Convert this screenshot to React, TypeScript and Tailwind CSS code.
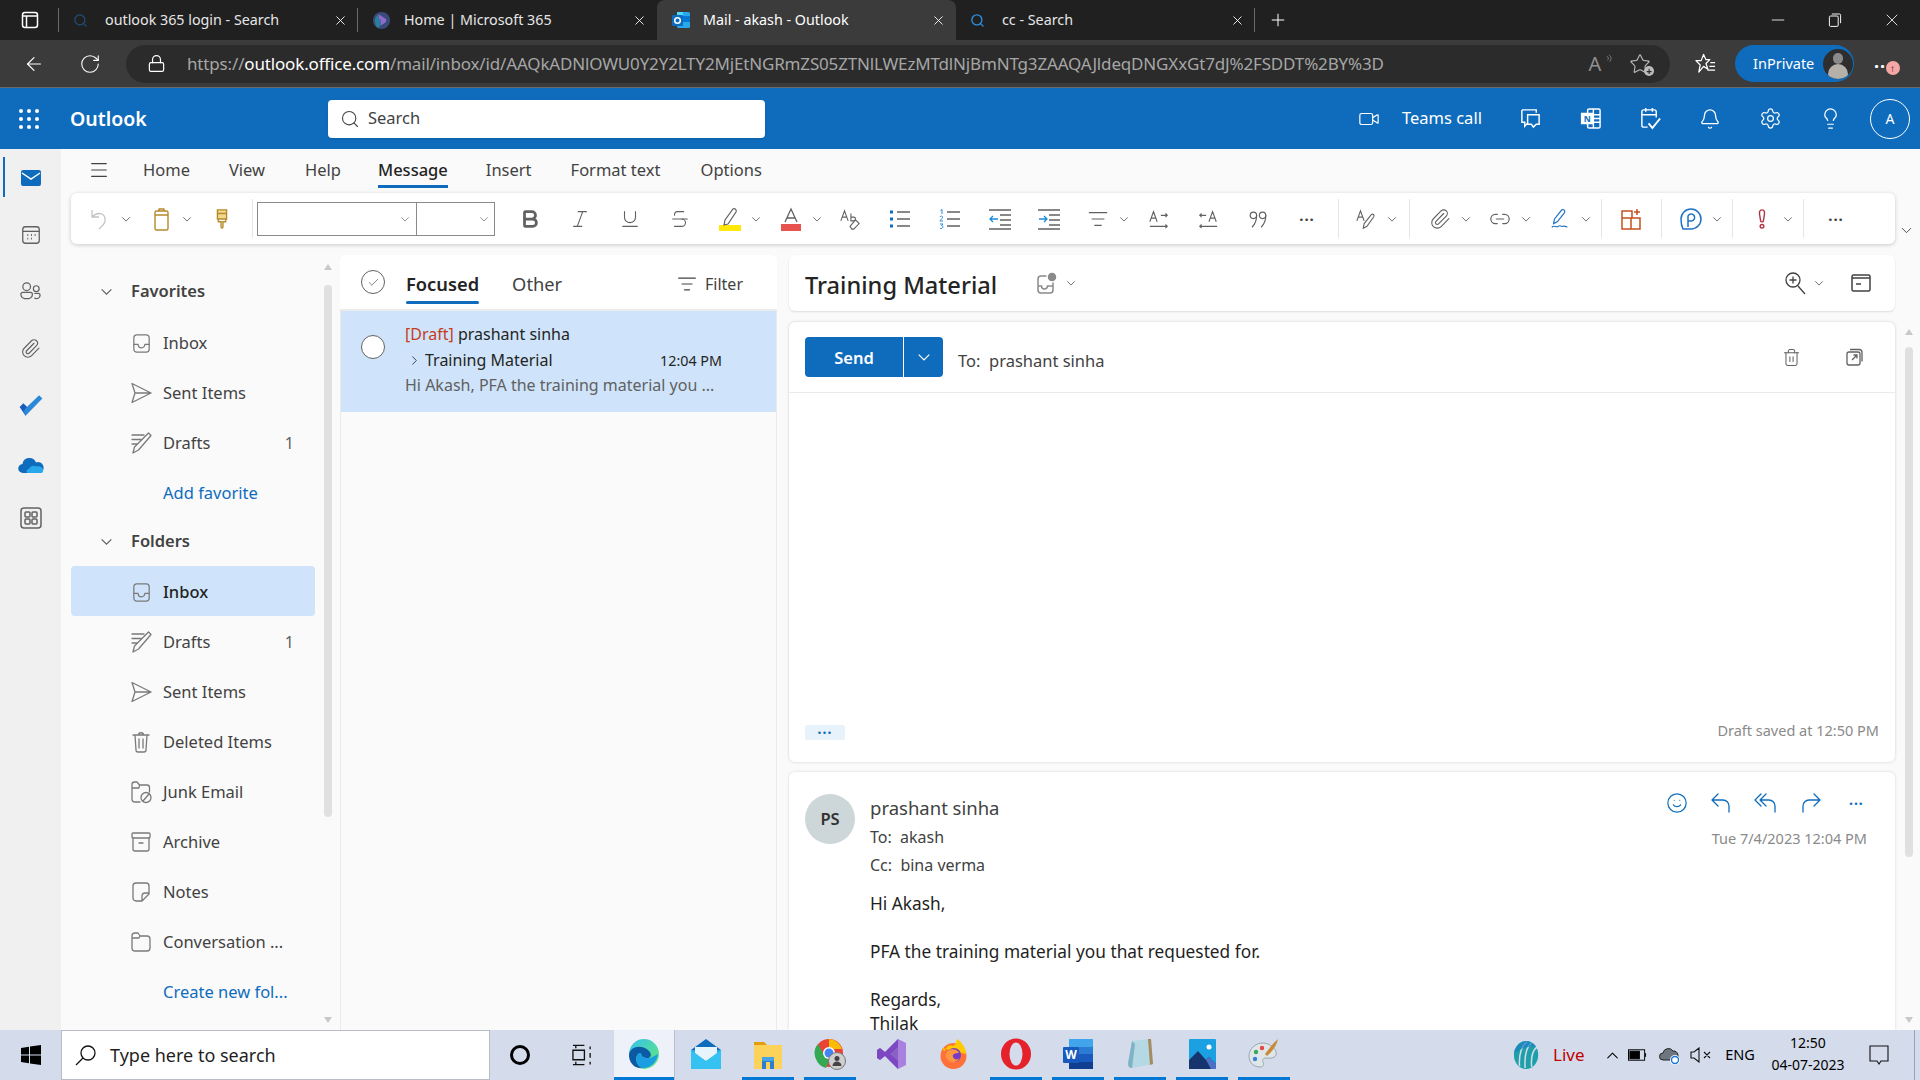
import type { ReactNode } from 'react'
import { Bold, Italic, Underline, Strikethrough, RotateCw, ArrowLeft, Lock, Search, Minus, Plus, X, Star, ChevronDown, ChevronRight, ChevronUp, Menu, Video, Bell, Settings, Lightbulb, Paperclip, Link2, Smile, Trash2, Check, ListFilter } from 'lucide-react'

function Ic({ children, className = '', sw = 1.3 }: { children: ReactNode; className?: string; sw?: number }) {
  return <svg viewBox="0 0 24 24" fill="none" stroke="currentColor" strokeWidth={sw} strokeLinecap="round" strokeLinejoin="round" className={className}>{children}</svg>
}

const InboxIc = () => <Ic className="w-[23px] h-[23px]"><rect x="4" y="3" width="16" height="18" rx="3" /><path d="M4 13h4.5a3.5 3.5 0 0 0 7 0H20" /></Ic>
const SentIc = () => <Ic className="w-[24px] h-[24px]"><path d="M3 2.5 22 12 3 21.5 6 12zM6 12h16" /></Ic>
const DraftIc = () => <Ic className="w-[24px] h-[24px]"><path d="M3 4h12M3 8.5h9M3 13h5" /><path d="M19.500 2 22 4.500 9.500 19 4 22l1.500-6z" /></Ic>
const TrashIc = () => <Ic className="w-[24px] h-[24px]"><path d="M4 5h16M9.500 5c0-3 5-3 5 0M6 5l1 15c0 1 .8 2 2 2h6c1.200 0 2-1 2-2l1-15M10 9v9M14 9v9" /></Ic>
const JunkIc = () => <Ic className="w-[24px] h-[24px]"><path d="M11 22H6a3 3 0 0 1-3-3V4.500A2.500 2.500 0 0 1 5.500 2H8l2.500 3H18a2.500 2.500 0 0 1 2.500 2.500V12M3 8h7l.5-3" /><circle cx="17" cy="17.500" r="5" /><path d="m14 21 6-7" /></Ic>
const ArchiveIc = () => <Ic className="w-[24px] h-[24px]"><rect x="3" y="3" width="18" height="5" rx="1" /><path d="M4 8v11a2 2 0 0 0 2 2h12a2 2 0 0 0 2-2V8M10 13h4" /></Ic>
const NoteIc = () => <Ic className="w-[24px] h-[24px]"><path d="M7 3h10a3 3 0 0 1 3 3v8l-7 7H7a3 3 0 0 1-3-3V6a3 3 0 0 1 3-3zM20 13h-4c-2 0-3 1.500-3 3.500V21" /></Ic>
const FolderIc = () => <Ic className="w-[24px] h-[24px]"><path d="M6 3h3l2 3h7a3 3 0 0 1 3 3v9a3 3 0 0 1-3 3H6a3 3 0 0 1-3-3V6a3 3 0 0 1 3-3zM3 8h7l1-2" /></Ic>

function Caret({ className = 'text-[#616161]' }: { className?: string }) {
  return <svg viewBox="0 0 12 12" className={`w-[10px] h-[10px] ${className}`} fill="none" stroke="currentColor" strokeWidth="1.100"><path d="M1.500 4 6 8.500 10.500 4" /></svg>
}

function Tab({ icon, title, active, sep }: { icon: ReactNode; title: string; active?: boolean; sep?: boolean }) {
  return (
    <div className={`w-[299px] h-[40px] flex items-center shrink-0 pl-[14px] relative ${active ? 'bg-[#3b3b3b] rounded-t-[8px] text-white' : 'text-[#e6e6e6]'}`}>
      <span className="w-[32px] flex items-center shrink-0">{icon}</span>
      <span className="w-[228px] text-[14.300px] truncate mt-[-1px]">{title}</span>
      <X className="w-[15px] h-[15px] text-white" strokeWidth={1.4} />
      {sep && <span className="absolute right-0 top-[8px] bottom-[8px] w-px bg-[#6a6a6a]" />}
    </div>
  )
}

function TopIcon({ children, className = 'w-[60px]' }: { children: ReactNode; className?: string }) {
  return <div className={`${className} h-full flex items-center justify-center shrink-0`}>{children}</div>
}

function TabBar() {
  const winBtn = 'w-[20px] h-[20px] text-white'
  return (
    <div className="h-[40px] bg-[#202020] flex items-center shrink-0">
      <div className="w-[59px] h-[40px] flex items-center justify-center border-r-0 relative">
        <svg viewBox="0 0 20 20" className="w-[20px] h-[20px] text-white mr-[-1px]" fill="none" stroke="currentColor" strokeWidth="1.500"><rect x="2.500" y="2.500" width="15" height="15" rx="2.500" /><path d="M2.500 6h15M6.500 6v11.500" /></svg>
        <span className="absolute right-0 top-[8px] bottom-[8px] w-px bg-[#6a6a6a]" />
      </div>
      <Tab icon={<Search className="w-[15px] h-[15px] text-[#1e4f7d]" strokeWidth={2} />} title="outlook 365 login - Search" sep />
      <Tab title="Home | Microsoft 365" icon={<svg viewBox="0 0 20 20" className="w-[19px] h-[19px]"><path d="M10 1a9 9 0 1 0 .01 0z" fill="#3a4a78" /><path d="M7 3.500 14 8c1.500 1 1.500 3 0 4l-5 3.500V9.500L7 8.500z" fill="#8f6ac8" /><path d="M7 3.500v5l2 1v6L6 18c-2-2-3-5-3-8s2-5 4-6.500z" fill="#2a7f9c" /></svg>} />
      <Tab active title="Mail - akash - Outlook" icon={<OutlookLogo />} />
      <Tab title="cc - Search" icon={<Search className="w-[15px] h-[15px] text-[#2c8fe0]" strokeWidth={2.200} />} sep />
      <div className="ml-[13px] w-[20px] flex justify-center"><Plus className="w-[20px] h-[20px] text-white" strokeWidth={1.200} /></div>
      <div className="ml-auto flex items-center h-full">
        <TopIcon className="w-[57px]"><Minus className={winBtn} strokeWidth={1} /></TopIcon>
        <TopIcon className="w-[57px]"><svg viewBox="0 0 20 20" className="w-[16px] h-[16px] text-white" fill="none" stroke="currentColor" strokeWidth="1.200"><rect x="3" y="5" width="11" height="13" rx="1.500" /><path d="M6 2.500h9.500A1.500 1.500 0 0 1 17 4v10" /></svg></TopIcon>
        <TopIcon className="w-[57px]"><X className={winBtn} strokeWidth={1} /></TopIcon>
      </div>
    </div>
  )
}

function OutlookLogo() {
  return (
    <svg viewBox="0 0 20 20" className="w-[20px] h-[20px]">
      <rect x="6" y="2" width="13" height="16" rx="1.500" fill="#28a8ea" />
      <rect x="12" y="6" width="7" height="6" fill="#0078d4" />
      <rect x="6" y="2" width="6" height="5" fill="#50d9ff" />
      <rect x="1" y="5" width="11" height="11" rx="1" fill="#0f6cbd" />
      <circle cx="6.500" cy="10.500" r="2.800" fill="none" stroke="#fff" strokeWidth="1.500" />
    </svg>
  )
}

function AddressBar() {
  return (
    <div className="h-[48px] bg-[#3b3b3b] border-b border-[#6a6a6a] flex items-center shrink-0 text-white box-border">
      <div className="w-[68px] flex justify-center"><ArrowLeft className="w-[22px] h-[22px]" strokeWidth={1.300} /></div>
      <div className="w-[44px] flex justify-center"><RotateCw className="w-[22px] h-[22px]" strokeWidth={1.200} /></div>
      <div className="ml-[14px] w-[1544px] h-[38px] bg-[#2b2b2b] rounded-full flex items-center">
        <span className="w-[61px] flex justify-center"><Lock className="w-[19px] h-[19px] text-white" strokeWidth={1.500} /></span>
        <span className="text-[17px] tracking-[-0.160px] text-[#a6a6a6] whitespace-nowrap w-[1388px] overflow-hidden">https://<span className="text-white">outlook.office.com</span>/mail/inbox/id/AAQkADNlOWU0Y2Y2LTY2MjEtNGRmZS05ZTNlLWEzMTdlNjBmNTg3ZAAQAJldeqDNGXxGt7dJ%2FSDDT%2BY%3D</span>
        <span className="w-[40px] flex justify-center text-[#8f8f8f] relative text-[20px]">A<svg viewBox="0 0 10 14" className="absolute right-[2px] top-[5px] w-[7px] h-[10px]" fill="none" stroke="currentColor"><path d="M1 3c3 1 3 4 1 6M4 1c4 2 4 7 1 10" /></svg></span>
        <span className="ml-[5px] w-[40px] flex justify-center relative text-[#bdbdbd]"><Star className="w-[22px] h-[22px]" strokeWidth={1.200} /><span className="absolute right-[6px] bottom-[-1px] w-[10px] h-[10px] rounded-full bg-[#bdbdbd] text-[#2b2b2b] flex items-center justify-center text-[10px] leading-none font-bold">+</span></span>
      </div>
      <div className="ml-[10px] w-[50px] flex justify-center"><svg viewBox="0 0 24 24" className="w-[23px] h-[23px]" fill="none" stroke="currentColor" strokeWidth="1.300" strokeLinejoin="round"><path d="M10 2.500 12.500 8h4l-4 4 2 6-4.500-3L5 21l1.500-7.500L2 9h5.500zM17 11h5M16 15h6M14 19h8" /></svg></div>
      <div className="w-[119px] h-[37px] rounded-full bg-[#0f6cbd] flex items-center pl-[18px] text-[14.500px] shrink-0 ml-[5px]">
        InPrivate
        <span className="ml-[9px] w-[30px] h-[30px] rounded-full bg-[#2e2e2e] overflow-hidden flex justify-center relative">
          <span className="absolute top-[4px] w-[10px] h-[11px] rounded-full bg-[#8a8a8a]" />
          <span className="absolute top-[15px] w-[20px] h-[20px] rounded-full bg-[#b5b0a8]" />
        </span>
      </div>
      <div className="ml-[20px] relative text-[18px] font-bold leading-none tracking-[1px] mt-[-6px]">...
        <span className="absolute left-[12px] top-[9px] w-[14px] h-[14px] rounded-full bg-[#f4a7a5] text-[#3b1111] text-[10px] flex items-center justify-center font-normal">↑</span>
      </div>
    </div>
  )
}

function Header() {
  return (
    <div className="h-[61px] bg-[#0f6cbd] flex items-center text-white shrink-0">
      <div className="w-[58px] flex justify-center">
        <div className="grid grid-cols-3 gap-[4px]">{[...Array(9)].map((_, i) => <span key={i} className="w-[4px] h-[4px] rounded-full bg-white" />)}</div>
      </div>
      <div className="ml-[12px] w-[258px] text-[19.500px] font-semibold">Outlook</div>
      <div className="w-[437px] h-[38px] bg-white rounded-[4px] flex items-center pl-[12px] text-[#424242] text-[16.500px] shadow-sm">
        <Search className="w-[20px] h-[20px] mr-[8px]" strokeWidth={1.300} />Search
      </div>
      <div className="ml-[587px] w-[34px] flex justify-center"><Video className="w-[22px] h-[22px]" strokeWidth={1.300} /></div>
      <div className="ml-[16px] w-[98px] text-[16.500px] whitespace-nowrap">Teams call</div>
      <TopIcon className="w-[60px] ml-[0px]"><svg viewBox="0 0 24 24" className="w-[23px] h-[23px]" fill="none" stroke="currentColor" strokeWidth="1.500"><path d="M3 3h15v3M3 3v13h3v4l3-3" /><path d="M9 8h12v10h-3l-3 3-2-3H9z" /></svg></TopIcon>
      <TopIcon><svg viewBox="0 0 24 24" className="w-[23px] h-[23px]" fill="none" stroke="currentColor" strokeWidth="1.500"><rect x="9" y="2" width="13" height="20" rx="1.500" /><path d="M15 8h7M15 12h7M15 16h7M15 2v20" /><rect x="2" y="6" width="13" height="12" fill="#fff" stroke="none" /><text x="8.500" y="15.500" fontSize="9" fontWeight="700" textAnchor="middle" fill="#0f6cbd" stroke="none" fontFamily="Noto Sans">N</text></svg></TopIcon>
      <TopIcon><svg viewBox="0 0 24 24" className="w-[23px] h-[23px]" fill="none" stroke="currentColor" strokeWidth="1.500"><path d="M9 21H5a2 2 0 0 1-2-2V5a2 2 0 0 1 2-2h11a2 2 0 0 1 2 2v6M3 8h15M7 1v4M14 1v4" /><path d="m10 17 4 5 8-10" strokeWidth="2" /></svg></TopIcon>
      <TopIcon><Bell className="w-[22px] h-[22px]" strokeWidth={1.400} /></TopIcon>
      <TopIcon><Settings className="w-[23px] h-[23px]" strokeWidth={1.300} /></TopIcon>
      <TopIcon><Lightbulb className="w-[23px] h-[23px]" strokeWidth={1.300} /></TopIcon>
      <div className="w-[40px] h-[40px] rounded-full border border-white flex items-center justify-center text-[14px] shrink-0 ml-[10px]">A</div>
    </div>
  )
}

function Rail() {
  return (
    <div className="w-[61px] bg-[#f0f0f0] shrink-0 flex flex-col items-center text-[#616161]">
      <div className="h-[57px] w-full flex items-center justify-center relative">
        <span className="absolute left-[3px] top-[8px] bottom-[9px] w-[2px] bg-[#0f6cbd]" />
        <svg viewBox="0 0 24 24" className="w-[24px] h-[24px]"><rect x="2" y="4" width="20" height="16" rx="2" fill="#0f6cbd" /><path d="m3 7 9 6 9-6" fill="none" stroke="#fff" strokeWidth="1.500" /></svg>
      </div>
      <div className="h-[57px] flex items-center"><svg viewBox="0 0 24 24" className="w-[22px] h-[22px]" fill="none" stroke="currentColor" strokeWidth="1.400"><rect x="3" y="3" width="18" height="18" rx="3" /><path d="M3 8h18" /><path d="M8 12h1M12 12h1M16 12h1M8 16h1M12 16h1" strokeWidth="2" /></svg></div>
      <div className="h-[57px] flex items-center"><svg viewBox="0 0 24 24" className="w-[23px] h-[23px]" fill="none" stroke="currentColor" strokeWidth="1.300"><circle cx="8" cy="7" r="4" /><circle cx="18" cy="9" r="3" /><path d="M2 15c0-1 1-2 2-2h8c1 0 2 1 2 2 0 6-12 6-12 0zM16 14h4c1 0 2 1 2 2 0 3-3 4-6 3" /></svg></div>
      <div className="h-[57px] flex items-center"><Paperclip className="w-[21px] h-[21px]" strokeWidth={1.300} /></div>
      <div className="h-[57px] flex items-center"><svg viewBox="0 0 24 24" className="w-[26px] h-[26px]"><path d="M1.500 13 5 9.500l4.500 4.500L7 21z" fill="#185abd" /><path d="M7 21 22.500 5l-3-3L7 14l-2 3z" fill="#2b88d8" /></svg></div>
      <div className="h-[61px] flex items-center"><svg viewBox="0 0 26 18" className="w-[26px] h-[18px]"><path d="M5 17a4.500 4.500 0 0 1-.5-9A7 7 0 0 1 18 6.500 5 5 0 0 1 22 17z" fill="#0f6cbd" /><path d="M10 17c-2 0-2-4 1-4 1-3 5-4 7-2.500 5-1 8 2 7 5-.5 1-1 1.500-3 1.500z" fill="#28a8ea" /></svg></div>
      <div className="h-[46px] flex items-center"><svg viewBox="0 0 24 24" className="w-[24px] h-[24px]" fill="none" stroke="currentColor" strokeWidth="1.500"><rect x="2" y="2" width="20" height="20" rx="3" /><rect x="6" y="6" width="5" height="5" rx="1" /><rect x="13" y="6" width="5" height="5" rx="1" /><rect x="6" y="13" width="5" height="5" rx="1" /><rect x="13" y="13" width="5" height="5" rx="1" /></svg></div>
    </div>
  )
}

function Cell({ children, className = 'w-[50px]' }: { children: ReactNode; className?: string }) {
  return <div className={`${className} h-full flex items-center justify-center shrink-0 text-[#616161]`}>{children}</div>
}

function Split({ children, className = 'w-[61px]' }: { children: ReactNode; className?: string }) {
  return (
    <div className={`${className} h-full flex items-center shrink-0 pl-[5px] text-[#616161]`}>
      <span className="w-[40px] flex justify-center">{children}</span>
      <span className="w-[12px] flex justify-center"><Caret /></span>
    </div>
  )
}

const Sep = ({ className }: { className: string }) => <span className={`w-px h-[39px] bg-[#e6e6e6] shrink-0 ${className}`} />
const t = 'w-[22px] h-[22px]'

function Toolbar() {
  return (
    <div className="flex items-start shrink-0">
      <div className="ml-[10px] w-[1824px] h-[51px] bg-white rounded-[6px] shadow-[0_1px_4px_rgba(0,0,0,0.2)] flex items-center pl-[4px]">
        <Split><svg viewBox="0 0 24 24" className="w-[24px] h-[24px] text-[#c4c4c4]" fill="none" stroke="currentColor" strokeWidth="1.300" strokeLinejoin="round"><path d="M4 3v7h7M4 10c3-3 7-4 10-3 4 2 4 8 1 11l-4 4" /></svg></Split>
        <Split><svg viewBox="0 0 24 24" className="w-[24px] h-[24px]" fill="none" stroke="#b58a2c" strokeWidth="1.400" strokeLinejoin="round"><rect x="6" y="4" width="13" height="19" rx="1.500" /><path d="M10 4V2h5v2M6 8h13" /></svg></Split>
        <Cell><svg viewBox="0 0 24 24" className={t} fill="none" stroke="#b58a2c" strokeWidth="1.500"><path d="M7 2h10v10H7zM7 6h10" fill="#f2d98a" /><path d="M8 12v3h3v6c0 1 2 1 2 0v-6h3v-3" /></svg></Cell>
        <Sep className="ml-[5px] mr-[4px]" />
        <div className="w-[238px] h-[34px] border border-[#8a8a8a] flex shrink-0">
          <div className="w-[159px] border-r border-[#8a8a8a] flex items-center justify-end pr-[6px]"><Caret className="text-[#8a8a8a]" /></div>
          <div className="flex-1 flex items-center justify-end pr-[5px]"><Caret className="text-[#8a8a8a]" /></div>
        </div>
        <span className="w-[10px] shrink-0" />
        <Cell><Bold className={t} strokeWidth={3} /></Cell>
        <Cell><Italic className={t} strokeWidth={1.200} /></Cell>
        <Cell><Underline className={t} strokeWidth={1.200} /></Cell>
        <Cell><Strikethrough className={t} strokeWidth={1.200} /></Cell>
        <Split><svg viewBox="0 0 24 24" className="w-[24px] h-[24px]"><rect x="1" y="18" width="22" height="6" fill="#ffe90a" /><path d="M6 18l1-5L15 2c2-1 4 1 3 3L10 17z" fill="none" stroke="#616161" strokeWidth="1.200" /></svg></Split>
        <Split className="w-[59px]"><svg viewBox="0 0 24 24" className="w-[24px] h-[24px]"><rect x="2" y="17" width="20" height="7" fill="#e8534f" /><path d="M6 15 12 2l6 13M8 11h8" fill="none" stroke="#616161" strokeWidth="1.300" /></svg></Split>
        <Cell><svg viewBox="0 0 24 24" className={t} fill="none" stroke="currentColor" strokeWidth="1.200"><path d="M2 14 6 3l4 11M3.500 10h5M13 6v8h3a2 2 0 0 0 0-4h-3" /><path d="m12 20 6-7 4 4-6 6h-2z" /></svg></Cell>
        <Cell><svg viewBox="0 0 24 24" className="w-[24px] h-[24px]" stroke="#616161" strokeWidth="1.300"><path d="M9 5h13M9 12h13M9 19h13" /><rect x="2" y="3.500" width="3" height="3" fill="#0f6cbd" stroke="none" /><rect x="2" y="10.500" width="3" height="3" fill="#0f6cbd" stroke="none" /><rect x="2" y="17.500" width="3" height="3" fill="#0f6cbd" stroke="none" /></svg></Cell>
        <Cell><svg viewBox="0 0 24 24" className="w-[24px] h-[24px]" stroke="#616161" strokeWidth="1.300"><path d="M9 5h13M9 12h13M9 19h13" /><path d="M2.500 3.500 4 2.500V7M2 10c.5-1.500 3-1 2.500.5S2 13 2 14h3M2 17h3l-1.500 1.500c2-.2 2 3-.5 3L2 21" fill="none" stroke="#2a8fdc" strokeWidth="1" /></svg></Cell>
        <Cell className="w-[49px]"><svg viewBox="0 0 24 24" className="w-[24px] h-[24px]" fill="none" stroke="#616161" strokeWidth="1.300"><path d="M1 3h22M12 8h11M12 13h11M12 18h11M1 22h22" /><path d="M10 12H2m3-3-3 3 3 3" stroke="#1c8bd8" /></svg></Cell>
        <Cell className="w-[49px]"><svg viewBox="0 0 24 24" className="w-[24px] h-[24px]" fill="none" stroke="#616161" strokeWidth="1.300"><path d="M1 3h22M12 8h11M12 13h11M12 18h11M1 22h22" /><path d="M2 12h8m-3-3 3 3-3 3" stroke="#1c8bd8" /></svg></Cell>
        <Split><svg viewBox="0 0 24 24" className="w-[22px] h-[22px]" fill="none" stroke="#616161" strokeWidth="1.300"><path d="M2 5h20M5 12h14M8 19h8" /></svg></Split>
        <Cell className="w-[49px]"><svg viewBox="0 0 24 24" className={t} fill="none" stroke="#616161" strokeWidth="1.200"><path d="M2 15 6 4l4 11M3.500 11h5M14 8h7m-2-2 2 2-2 2M2 20h19m-2-2 2 2-2 2" /></svg></Cell>
        <Cell><svg viewBox="0 0 24 24" className={t} fill="none" stroke="#616161" strokeWidth="1.200"><path d="M13 15 17 4l4 11M14.500 11h5M10 8H3m2-2L3 8l2 2M22 20H3m2-2-2 2 2 2" /></svg></Cell>
        <Cell className="w-[49px]"><svg viewBox="0 0 24 24" className={t} fill="none" stroke="#616161" strokeWidth="1.300"><circle cx="7" cy="8" r="3.500" /><circle cx="17" cy="8" r="3.500" /><path d="M10.500 8c0 6-2 10-5 13M20.500 8c0 6-2 10-5 13" /></svg></Cell>
        <Cell><span className="font-bold text-[15px] tracking-[1px] text-[#424242] mt-[-6px]">...</span></Cell>
        <Sep className="ml-[6px] mr-[2px]" />
        <Split><svg viewBox="0 0 24 24" className={t} fill="none" stroke="#616161" strokeWidth="1.200"><path d="M2 14 6 3l4 11M3.500 10h5" /><path d="m9 22 1-5L18 7c1.500-1 3.500.5 2.500 2.500L13 20z" /></svg></Split>
        <Sep className="ml-[7px] mr-[5px]" />
        <Split className="w-[60px]"><Paperclip className={t} strokeWidth={1.200} /></Split>
        <Split className="w-[60px]"><Link2 className={t} strokeWidth={1.300} /></Split>
        <Split><svg viewBox="0 0 24 24" className={t} fill="none" stroke="#1c73c4" strokeWidth="1.300"><path d="m5 17 1-5L14 2c2-1 4 1 3 3l-8 10zM3 21c3-3 5 1 7-1s3 1 5 0 3 0 5 1" /></svg></Split>
        <Sep className="ml-[5px] mr-[4px]" />
        <Cell><svg viewBox="0 0 24 24" className="w-[24px] h-[24px]" fill="none" stroke="#c4501f" strokeWidth="1.500"><path d="M13 11V4H3v18h18V11zM3 11h18M12 11v11M18 2v6M15 5h6" /></svg></Cell>
        <Sep className="ml-[5px] mr-[4px]" />
        <Split><svg viewBox="0 0 24 24" className="w-[24px] h-[24px]" fill="none" stroke="#1c73c4" strokeWidth="1.500"><path d="M4 22c-1-2-2-5-2-10A10 10 0 1 1 12 22z" /><path d="M9 20V9a3.500 3.500 0 1 1 3.500 5H9" /></svg></Split>
        <Sep className="ml-[5px] mr-[4px]" />
        <Split><svg viewBox="0 0 24 24" className={t}><path d="M12 2c-3 0-3 3-2.500 6l1 6c.2 1.500 2.800 1.500 3 0l1-6C15 5 15 2 12 2z" fill="none" stroke="#b33040" strokeWidth="1.500" /><circle cx="12" cy="20" r="2" fill="none" stroke="#b33040" strokeWidth="1.500" /></svg></Split>
        <Sep className="ml-[5px] mr-[7px]" />
        <Cell><span className="font-bold text-[15px] tracking-[1px] text-[#424242] mt-[-6px]">...</span></Cell>
      </div>
      <div className="ml-[3px] mt-[29px] text-[#424242]"><ChevronDown className="w-[17px] h-[17px]" strokeWidth={1.300} /></div>
    </div>
  )
}

function Row({ icon, label, count, active, low }: { icon: ReactNode; label: string; count?: string; active?: boolean; low?: boolean }) {
  return (
    <div className={`h-[50px] w-[244px] flex items-center shrink-0 rounded-[4px] ${low ? 'pt-[2px]' : ''} ${active ? 'bg-[#cfe4fa] text-[#242424] font-medium' : 'text-[#424242]'}`}>
      <span className="ml-[58px] w-[24px] flex justify-center text-[#7a7a7a] shrink-0">{icon}</span>
      <span className="ml-[10px] text-[16.500px] flex-1">{label}</span>
      {count && <span className="text-[16px] text-[#616161] w-[22px] mr-[21px] text-right">{count}</span>}
    </div>
  )
}

function Head({ label }: { label: string }) {
  return (
    <div className="h-[50px] flex items-center text-[#424242] shrink-0 pl-[29px]">
      <Caret className="text-[#616161] w-[13px] h-[13px]" />
      <span className="text-[16.500px] font-semibold ml-[18px]">{label}</span>
    </div>
  )
}

function LinkRow({ label, low }: { label: string; low?: boolean }) {
  return <div className={`h-[50px] flex items-center pl-[92px] text-[16.500px] text-[#0f6cbd] shrink-0 ${low ? 'pt-[2px]' : ''}`}>{label}</div>
}

function Tri({ up }: { up?: boolean }) {
  return <svg viewBox="0 0 8 6" className="w-[8px] h-[6px] text-[#c8c8c8] shrink-0" fill="currentColor"><path d={up ? 'M0 6h8L4 0z' : 'M0 0h8L4 6z'} /></svg>
}

function FolderPane() {
  return (
    <div className="w-[279px] shrink-0 flex h-full">
      <div className="ml-[10px] w-[244px] pt-[22px] flex flex-col">
        <Head label="Favorites" />
        <div className="h-[2px] shrink-0" />
        <Row icon={<InboxIc />} label="Inbox" />
        <Row icon={<SentIc />} label="Sent Items" />
        <Row icon={<DraftIc />} label="Drafts" count="1" />
        <LinkRow label="Add favorite" />
        <div className="mt-[-2px]"><Head label="Folders" /></div>
        <Row icon={<InboxIc />} label="Inbox" active low />
        <Row icon={<DraftIc />} label="Drafts" count="1" low />
        <Row icon={<SentIc />} label="Sent Items" low />
        <Row icon={<TrashIc />} label="Deleted Items" low />
        <Row icon={<JunkIc />} label="Junk Email" low />
        <Row icon={<ArchiveIc />} label="Archive" low />
        <Row icon={<NoteIc />} label="Notes" low />
        <Row icon={<FolderIc />} label="Conversation ..." low />
        <LinkRow label="Create new fol..." low />
      </div>
      <div className="ml-[9px] w-[8px] flex flex-col pt-[20px] pb-[7px]">
        <Tri up />
        <div className="mt-[15px] h-[532px] rounded-full bg-[#e0e0e0]" />
        <div className="flex-1" />
        <Tri />
      </div>
    </div>
  )
}

function MailList() {
  return (
    <div className="w-[437px] shrink-0 flex flex-col pt-[11px] h-full">
      <div className="h-[56px] bg-white rounded-t-[6px] border-b-2 border-[#ebebeb] flex items-center shrink-0 text-[#424242] box-border">
        <span className="w-[66px] flex justify-center">
          <span className="w-[24px] h-[24px] rounded-full border border-[#616161] flex items-center justify-center"><Check className="w-[13px] h-[13px]" strokeWidth={1.200} /></span>
        </span>
        <div className="h-full flex flex-col justify-center relative pt-[4px]">
          <span className="text-[18.300px] font-semibold text-[#242424]">Focused</span>
          <span className="absolute left-0 right-0 bottom-[5px] h-[3px] rounded-full bg-[#0f6cbd]" />
        </div>
        <span className="ml-[33px] text-[18.300px] text-[#424242] mt-[4px]">Other</span>
        <ListFilter className="ml-auto w-[20px] h-[20px] mr-[8px] mt-[3px]" strokeWidth={1.400} />
        <span className="text-[16px] mr-[34px] mt-[3px]">Filter</span>
      </div>
      <div className="h-[101px] bg-[#cfe4fa] flex shrink-0 border-x border-[#ebebeb]">
        <span className="w-[64px] pt-[24px] flex justify-center shrink-0"><span className="w-[24px] h-[24px] rounded-full bg-white border border-[#616161]" /></span>
        <div className="flex-1 pt-[11px] pr-[54px] text-[16px] leading-[25.500px] min-w-0">
          <div className="text-[#242424] whitespace-nowrap"><span className="text-[#c43e1c]">[Draft]</span> prashant sinha</div>
          <div className="flex items-center text-[#242424]">
            <ChevronRight className="w-[15px] h-[15px] ml-[2px] mr-[3px]" strokeWidth={1.300} />
            <span>Training Material</span>
            <span className="ml-auto text-[14.300px]">12:04 PM</span>
          </div>
          <div className="text-[#616161] whitespace-nowrap overflow-hidden">Hi Akash, PFA the training material you ...</div>
        </div>
      </div>
      <div className="flex-1 bg-[#fafafa] border-x border-[#ebebeb]" />
    </div>
  )
}

function ReplyIc({ flip }: { flip?: boolean }) {
  return <Ic className={`w-[24px] h-[24px] ${flip ? '-scale-x-100' : ''}`} sw={1.300}><path d="M9 3 3 9l6 6M3 9h11a6 6 0 0 1 6 6v6" /></Ic>
}

function ReadingPane() {
  return (
    <div className="flex-1 flex min-w-0 h-full">
      <div className="ml-[12px] w-[1106px] flex flex-col pt-[11px] h-full">
        <div className="h-[56px] bg-white rounded-[6px] shadow-[0_1px_2px_rgba(0,0,0,0.12)] flex items-center shrink-0 pl-[16px] pr-[22px]">
          <span className="text-[23.600px] font-medium text-[#242424] mt-[5px]">Training Material</span>
          <span className="ml-[38px] text-[#8a8a8a]"><svg viewBox="0 0 24 24" className="w-[24px] h-[24px]" fill="none" stroke="currentColor" strokeWidth="1.500"><rect x="3" y="5" width="15" height="17" rx="3" /><path d="M3 15h3.500a3 3 0 0 0 6 0H18" /><circle cx="17" cy="6" r="5" fill="#8a8a8a" stroke="#fff" /></svg></span>
          <span className="ml-[7px]"><Caret /></span>
          <span className="ml-auto text-[#424242]"><svg viewBox="0 0 24 24" className="w-[24px] h-[24px]" fill="none" stroke="currentColor" strokeWidth="1.300"><circle cx="10" cy="9" r="7" /><path d="M15 15l7 8M10 5.500v7M6.500 9h7" /></svg></span>
          <span className="ml-[7px] mr-[25px]"><Caret /></span>
          <svg viewBox="0 0 24 24" className="w-[24px] h-[24px] text-[#424242]" fill="none" stroke="currentColor" strokeWidth="1.500"><rect x="3" y="4" width="18" height="16" rx="1.500" /><path d="M3 7h18M7 13h5" /></svg>
        </div>
        <div className="mt-[11px] h-[440px] bg-white rounded-[6px] shadow-[0_0_3px_rgba(0,0,0,0.18)] shrink-0 flex flex-col">
          <div className="h-[71px] border-b border-[#ebebeb] flex items-center pl-[16px] pr-[31px] shrink-0">
            <div className="w-[98px] h-[40px] bg-[#0f6cbd] rounded-l-[4px] flex items-center justify-center text-white text-[16.500px] font-semibold pt-[2px]">Send</div>
            <div className="ml-px w-[39px] h-[40px] bg-[#0f6cbd] rounded-r-[4px] flex items-center justify-center"><Caret className="text-white w-[14px] h-[14px]" /></div>
            <span className="ml-[15px] text-[16.500px] text-[#424242] mt-[8px] whitespace-pre">To:  prashant sinha</span>
            <span className="ml-auto text-[#616161] mt-[1px]"><Trash2 className="w-[19px] h-[19px]" strokeWidth={1.300} /></span>
            <span className="ml-[43px] text-[#616161] mt-[1px]"><svg viewBox="0 0 20 20" className="w-[20px] h-[20px]" fill="none" stroke="currentColor" strokeWidth="1.300"><rect x="3" y="4" width="13" height="13" rx="2" /><path d="M6 1.500h9a3 3 0 0 1 3 3v9M8 12l5-5M9.500 7H13v3.500" /></svg></span>
          </div>
          <div className="flex-1" />
          <div className="h-[37px] flex items-start pl-[16px] pr-[16px] shrink-0">
            <span className="w-[40px] h-[15px] rounded-[2px] bg-[#e8f2fb] flex items-center justify-center text-[#0f6cbd] text-[14px] font-bold leading-none tracking-[1px] pb-[7px]">...</span>
            <span className="ml-auto text-[14.500px] text-[#8a8a8a] mt-[-5px]">Draft saved at 12:50 PM</span>
          </div>
        </div>
        <div className="mt-[10px] flex-1 bg-white rounded-t-[6px] shadow-[0_0_3px_rgba(0,0,0,0.15)] flex pl-[16px] pr-[28px] pt-[22px] min-h-0">
          <div className="w-[50px] h-[50px] rounded-full bg-[#cdd6d8] text-[#323232] flex items-center justify-center text-[16.500px] font-semibold shrink-0">PS</div>
          <div className="ml-[15px] flex-1 min-w-0">
            <div className="flex items-start justify-between">
              <div className="text-[#424242]">
                <div className="text-[18.500px] leading-[28px]">prashant sinha</div>
                <div className="text-[16px] leading-[28px] whitespace-pre mt-[1px]">To:  akash</div>
                <div className="text-[16px] leading-[28px] whitespace-pre">Cc:  bina verma</div>
              </div>
              <div className="flex flex-col items-end">
                <div className="h-[18px] flex items-center gap-[21px] text-[#0f6cbd]">
                  <Smile className="w-[22px] h-[22px]" strokeWidth={1.300} />
                  <ReplyIc />
                  <Ic className="w-[24px] h-[24px]" sw={1.300}><path d="M7 3 1 9l6 6M12 3 6 9l6 6M6 9h9a6 6 0 0 1 6 6v6" /></Ic>
                  <ReplyIc flip />
                  <span className="font-bold w-[18px] ml-[5px] text-[14px] tracking-[1px] mt-[-8px]">...</span>
                </div>
                <div className="text-[14.500px] text-[#8a8a8a] mt-[16px]">Tue 7/4/2023 12:04 PM</div>
              </div>
            </div>
            <div className="mt-[13px] text-[17.300px] leading-[24px] text-[#1f1f1f]">
              <div>Hi Akash,</div>
              <div className="mt-[24px]">PFA the training material you that requested for.</div>
              <div className="mt-[24px]">Regards,</div>
              <div>Thilak</div>
            </div>
          </div>
        </div>
      </div>
      <div className="ml-[10px] w-[8px] flex flex-col pt-[85px] pb-[7px]">
        <Tri up />
        <div className="mt-[12px] h-[510px] rounded-full bg-[#e0e0e0]" />
        <div className="flex-1" />
        <Tri />
      </div>
    </div>
  )
}

function App_({ bar, children, className = 'w-[62px]' }: { bar?: boolean; children: ReactNode; className?: string }) {
  return (
    <div className={`${className} h-full flex flex-col shrink-0`}>
      <div className="flex-1 flex items-center justify-center">{children}</div>
      <div className={`h-[3px] mx-[5px] ${bar ? 'bg-[#0078d4]' : ''}`} />
    </div>
  )
}

function Taskbar() {
  const a = 'w-[32px] h-[32px]'
  return (
    <div className="h-[50px] bg-[#d4dcec] flex items-center shrink-0 text-black">
      <div className="w-[61px] flex justify-center">
        <svg viewBox="0 0 20 20" className="w-[20px] h-[20px]" fill="#000"><path d="M0 3l8-1.200V9.500H0zM9 1.600 20 0v9.500H9zM0 10.500h8v7.700L0 17zM9 10.500h11V20L9 18.400z" /></svg>
      </div>
      <div className="w-[429px] h-full bg-white border border-[#b8bcc4] flex items-center pl-[12px] shrink-0 text-[#1f1f1f] text-[18px]">
        <svg viewBox="0 0 24 24" className="w-[24px] h-[24px] mr-[12px]" fill="none" stroke="#111" strokeWidth="1.300"><circle cx="14" cy="10" r="7" /><path d="M9 15l-7 7" /></svg>
        Type here to search
      </div>
      <div className="w-[60px] flex justify-center shrink-0"><span className="w-[20px] h-[20px] rounded-full border-[3px] border-black" /></div>
      <div className="w-[64px] flex justify-center shrink-0"><svg viewBox="0 0 22 24" className="w-[21px] h-[24px]" fill="none" stroke="#111" strokeWidth="1.400"><path d="M1 2h12M4 2v3M1 22h12M4 22v-3M1 7h12v10H1zM19 3v3M19 10v5M19 19v3" /></svg></div>
      <div className="w-[61px] h-full bg-[#eef1f9] border-r border-[#b8c0d0] flex flex-col shrink-0">
        <div className="flex-1 flex items-center justify-center">
          <svg viewBox="0 0 32 32" className={a}>
            <defs><linearGradient id="edge" x1="0" y1="0" x2="1" y2="1"><stop offset="0" stopColor="#35c1f1" /><stop offset="1" stopColor="#66eb6e" /></linearGradient></defs>
            <circle cx="16" cy="16" r="15" fill="url(#edge)" />
            <path d="M1 17C2 8 14 6 21 13c3 3 2 7-1 7-4 0-7-1-7-5C7 15 6 26 14 30 7 31 1 25 1 17z" fill="#0c59a4" />
            <path d="M13 15c0 4 3 5 7 5 4 0 6-2 10-4-1 9-9 15-16 14-8-4-7-15-1-15z" fill="#1b9de2" />
          </svg>
        </div>
        <div className="h-[3px] bg-[#0078d4]" />
      </div>
      <App_>
        <svg viewBox="0 0 32 32" className={a}><path d="M1 12 16 1l15 11v19H1z" fill="#0f6cbd" /><path d="M1 12h30v19H1z" fill="#28a8ea" /><path d="M5 9h22v8l-11 6-11-6z" fill="#e8f4fc" /><path d="M1 12l15 11 15-11v19H1z" fill="#35c1f1" /></svg>
      </App_>
      <App_ bar>
        <svg viewBox="0 0 32 32" className={a}><path d="M2 4h10l3 3h15v24H2z" fill="#fcd25a" /><path d="M2 4h10l3 3H2z" fill="#e39e0c" /><path d="M10 31v-9c0-2 1-3 3-3h6c2 0 3 1 3 3v9h-4v-7h-4v7z" fill="#2b7fd0" /><rect x="10" y="19" width="12" height="4" fill="#45a4e6" /></svg>
      </App_>
      <App_ bar>
        <svg viewBox="0 0 32 32" className={a}><circle cx="15" cy="15" r="14" fill="#ea4335" /><path d="M2 21a14 14 0 0 1 2-15l6 11 5 5-3 8A14 14 0 0 1 2 21z" fill="#34a853" /><path d="M15 1a14 14 0 0 1 13 10H15z" fill="#fbbc05" /><circle cx="15" cy="15" r="6" fill="#fff" /><circle cx="15" cy="15" r="4.500" fill="#4285f4" /><circle cx="23" cy="23" r="8.500" fill="#cfcfcf" stroke="#777" /><circle cx="23" cy="20.500" r="2.500" fill="#444" /><path d="M18.500 28c0-6 9-6 9 0z" fill="#444" /></svg>
      </App_>
      <App_>
        <svg viewBox="0 0 32 32" className={a}><path d="M22 1 30 5v22l-8 4L9 18l-5 4-3-2V12l3-2 5 4z" fill="#a97fe0" /><path d="M22 9 14 16l8 7z" fill="#d4d8ec" /><path d="M22 1 9 14 4 10 1 12v8l3 2 5-4 13 13z" fill="#6b2fb5" opacity="0.700" /></svg>
      </App_>
      <App_>
        <svg viewBox="0 0 32 32" className={a}><circle cx="15.500" cy="18" r="13" fill="#ff7139" /><path d="M4 10c1 2 2 3 3 3 1-5 5-7 8-5 4-2 3-6 4-7 5 3 9 9 9 15z" fill="#ffcb00" /><circle cx="16" cy="17" r="7" fill="#7a3bc4" /><path d="M10 13c3-3 10-2 11 2-4 0-7 1-6 4s5 3 6 1c-1 4-7 6-11 2s-2-7 0-9z" fill="#ff9640" /></svg>
      </App_>
      <App_ bar>
        <svg viewBox="0 0 32 32" className={a}><ellipse cx="16" cy="16" rx="15" ry="15.500" fill="#e5222b" /><ellipse cx="16" cy="16" rx="6.500" ry="11.500" fill="#d4dcec" /></svg>
      </App_>
      <App_ bar>
        <svg viewBox="0 0 32 32" className={a}><rect x="7" y="1" width="24" height="30" rx="1.500" fill="#2b7cd3" /><rect x="7" y="1" width="24" height="8" rx="1" fill="#41a5ee" /><rect x="7" y="16" width="24" height="8" fill="#185abd" /><rect x="7" y="24" width="24" height="7" fill="#103f91" /><rect x="1" y="9" width="16" height="16" rx="1" fill="#185abd" /><text x="9" y="21" fontSize="12" fontWeight="700" textAnchor="middle" fill="#fff" fontFamily="Noto Sans">W</text></svg>
      </App_>
      <App_ bar>
        <svg viewBox="0 0 32 32" className={a}><path d="M8 3 27 1l2 25-21 4C3 30 4 25 5 20z" fill="#b4d8e4" /><path d="M27 1l2 25-3 1-2-26z" fill="#a58b5f" /><path d="M8 3 5 20c-1 5-2 10 3 10l3-24z" fill="#7fb2c4" /></svg>
      </App_>
      <App_ bar>
        <svg viewBox="0 0 32 32" className={a}><rect x="3" y="1" width="27" height="30" rx="1" fill="#1ba1e2" /><path d="M3 31V22l9-9 8 9 3-3 7 7v5z" fill="#16356e" /><path d="M20 22l3-3 7 7v5h-5z" fill="#4d70c4" /><circle cx="23" cy="9" r="2.500" fill="#fff" /></svg>
      </App_>
      <App_ bar>
        <svg viewBox="0 0 32 32" className={a}><path d="M15 5C7 5 1 11 1 18s5 11 11 11c4 0 4-3 3-5s0-4 3-4 8 1 10-3S23 5 15 5z" fill="#dfe6ea" stroke="#9aa7ad" /><circle cx="8" cy="14" r="2.200" fill="#3aa757" /><circle cx="14" cy="10" r="2.200" fill="#e8453c" /><circle cx="7" cy="21" r="2.200" fill="#3a7fd5" /><path d="M30 1c-1 6-5 12-11 17l-2-2C21 11 25 5 30 1z" fill="#c98b3a" /></svg>
      </App_>
      <div className="ml-[217px] w-[30px] flex justify-center shrink-0">
        <svg viewBox="0 0 30 32" className="w-[28px] h-[32px]"><ellipse cx="14" cy="16" rx="13" ry="15" fill="#1fa0a8" /><path d="M7 28C6 14 10 5 15 2M13 30C12 16 15 7 20 3M20 29c-1-10 1-18 6-22" stroke="#d4dcec" strokeWidth="1.600" fill="none" /><path d="M1 14C3 6 9 1 14 1c4 0 8 2 11 6-8-1-17 2-24 7z" fill="#1b7fc4" opacity="0.700" /></svg>
      </div>
      <div className="ml-[11px] w-[47px] text-[17px] text-[#c00000] shrink-0">Live</div>
      <div className="w-[24px] flex justify-center shrink-0"><ChevronUp className="w-[19px] h-[19px]" strokeWidth={1.300} /></div>
      <div className="w-[26px] flex justify-center shrink-0"><svg viewBox="0 0 20 12" className="w-[19px] h-[12px]" fill="none" stroke="#000"><rect x="0.500" y="0.500" width="17" height="11" /><rect x="2" y="2" width="10" height="8" fill="#000" /><path d="M18.500 4v4" /></svg></div>
      <div className="w-[40px] flex justify-center shrink-0">
        <svg viewBox="0 0 22 22" className="w-[22px] h-[22px]"><path d="M4 16a3.500 3.500 0 0 1 0-7 5.500 5.500 0 0 1 10-2 4.500 4.500 0 0 1 5 5 3 3 0 0 1 0 4z" fill="#6f7680" stroke="#222" /><circle cx="16" cy="16" r="5" fill="#fff" /><circle cx="16" cy="16" r="3.500" fill="none" stroke="#1976d2" strokeWidth="1.400" /></svg>
      </div>
      <div className="w-[22px] flex justify-center shrink-0"><svg viewBox="0 0 22 16" className="w-[22px] h-[16px]" fill="none" stroke="#111" strokeWidth="1.100"><path d="M1 5h3l5-4v14l-5-4H1zM14 5l6 6M20 5l-6 6" /></svg></div>
      <div className="w-[56px] text-center text-[14.500px] shrink-0">ENG</div>
      <div className="w-[80px] text-center text-[14px] leading-[22px] shrink-0 mt-[-2px]"><div>12:50</div><div>04-07-2023</div></div>
      <div className="w-[62px] flex justify-center shrink-0"><svg viewBox="0 0 22 22" className="w-[22px] h-[22px]" fill="none" stroke="#111" strokeWidth="1.100"><path d="M2 2h18v15h-7l-2 3-2-3H2z" /></svg></div>
      <div className="ml-[4px] w-px h-full bg-[#9aa4b8]" />
    </div>
  )
}

export default function App() {
  return (
    <div className="w-[1920px] h-[1080px] overflow-hidden flex flex-col font-['Noto_Sans',sans-serif] bg-[#fafafa]">
      <TabBar />
      <AddressBar />
      <Header />
      <div className="flex-1 flex min-h-0">
        <Rail />
        <div className="flex-1 flex flex-col min-w-0">
          <div className="h-[44px] flex items-center shrink-0 text-[#424242] text-[16.500px] pb-[2px]">
            <div className="w-[72px] pl-[27px]"><Menu className="w-[22px] h-[22px]" strokeWidth={1.200} /></div>
            <span className="ml-[10px]">Home</span>
            <span className="ml-[39px]">View</span>
            <span className="ml-[40px]">Help</span>
            <span className="ml-[37px] h-full relative flex items-center text-[#242424] font-medium">Message<span className="absolute left-0 right-0 bottom-[3px] h-[3px] bg-[#0f6cbd]" /></span>
            <span className="ml-[38px]">Insert</span>
            <span className="ml-[39px]">Format text</span>
            <span className="ml-[40px]">Options</span>
          </div>
          <Toolbar />
          <div className="flex-1 flex min-h-0 overflow-hidden">
            <FolderPane />
            <MailList />
            <ReadingPane />
          </div>
        </div>
      </div>
      <Taskbar />
    </div>
  )
}
